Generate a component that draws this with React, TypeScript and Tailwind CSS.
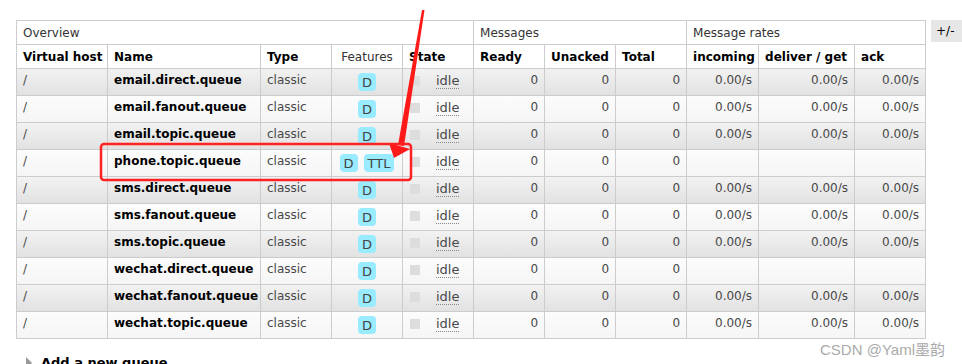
import React from "react";

type Queue = {
  name: string;
  features: string[];
  rates: boolean;
};

const queues: Queue[] = [
  { name: "email.direct.queue", features: ["D"], rates: true },
  { name: "email.fanout.queue", features: ["D"], rates: true },
  { name: "email.topic.queue", features: ["D"], rates: true },
  { name: "phone.topic.queue", features: ["D", "TTL"], rates: false },
  { name: "sms.direct.queue", features: ["D"], rates: true },
  { name: "sms.fanout.queue", features: ["D"], rates: true },
  { name: "sms.topic.queue", features: ["D"], rates: true },
  { name: "wechat.direct.queue", features: ["D"], rates: false },
  { name: "wechat.fanout.queue", features: ["D"], rates: true },
  { name: "wechat.topic.queue", features: ["D"], rates: true },
];

const cell = "border border-[#cccccc] h-[27px] px-[6px] pt-[4px] pb-0 align-top whitespace-nowrap leading-[15px]";

export default function App() {
  return (
    <div className="relative w-[962px] h-[364px] overflow-hidden bg-white font-['DejaVu_Sans',sans-serif] text-[12px] text-[#484848]">
      <div className="flex items-start pt-[20px] pl-[16px]">
        <table className="table-fixed border-collapse w-[910px]">
          <colgroup>
            <col className="w-[91px]" />
            <col className="w-[153px]" />
            <col className="w-[71px]" />
            <col className="w-[71px]" />
            <col className="w-[71px]" />
            <col className="w-[71px]" />
            <col className="w-[71px]" />
            <col className="w-[71px]" />
            <col className="w-[72px]" />
            <col className="w-[96px]" />
            <col className="w-[71px]" />
          </colgroup>
          <thead>
            <tr className="text-[#333333]">
              <th colSpan={5} className="border border-[#cccccc] h-[24px] px-[6px] text-left font-normal">Overview</th>
              <th colSpan={3} className="border border-[#cccccc] h-[24px] px-[6px] text-left font-normal">Messages</th>
              <th colSpan={3} className="border border-[#cccccc] h-[24px] px-[6px] text-left font-normal">Message rates</th>
            </tr>
            <tr className="text-black">
              <th className="border border-[#cccccc] h-[24px] px-[6px] text-left font-bold whitespace-nowrap">Virtual host</th>
              <th className="border border-[#cccccc] px-[6px] text-left font-bold">Name</th>
              <th className="border border-[#cccccc] px-[6px] text-left font-bold">Type</th>
              <th className="border border-[#cccccc] px-[6px] text-center font-normal text-[#333333]">Features</th>
              <th className="border border-[#cccccc] px-[6px] text-left font-bold">State</th>
              <th className="border border-[#cccccc] px-[6px] text-left font-bold">Ready</th>
              <th className="border border-[#cccccc] px-[6px] text-left font-bold">Unacked</th>
              <th className="border border-[#cccccc] px-[6px] text-left font-bold">Total</th>
              <th className="border border-[#cccccc] px-[6px] text-left font-bold">incoming</th>
              <th className="border border-[#cccccc] px-[6px] text-left font-bold whitespace-nowrap">deliver / get</th>
              <th className="border border-[#cccccc] px-[6px] text-left font-bold">ack</th>
            </tr>
          </thead>
          <tbody>
            {queues.map((q, i) => (
              <tr
                key={q.name}
                className={
                  i % 2 === 0
                    ? "bg-linear-to-b from-[#f2f2f2] to-[#e1e1e1]"
                    : "bg-linear-to-b from-[#fcfcfc] to-[#f5f5f5]"
                }
              >
                <td className={cell}>/</td>
                <td className={cell + " font-bold text-black"}>{q.name}</td>
                <td className={cell}>classic</td>
                <td className={cell + " text-center"}>
                  <span className="inline-flex gap-[6px] align-top">
                    {q.features.map((f) => (
                      <span key={f} className="inline-block rounded-[4px] bg-[#99ebff] px-[4px] h-[18px] leading-[19px] text-[#444444] text-[13px]">
                        {f}
                      </span>
                    ))}
                  </span>
                </td>
                <td className={cell}>
                  <span className="flex items-start">
                    <span className="mt-[3px] w-[10px] h-[10px] bg-[#dddddd] ml-[1px]" />
                    <span className="ml-[16px] border-b border-dotted border-[#888888] leading-[15px] text-[13px]">idle</span>
                  </span>
                </td>
                <td className={cell + " text-right"}>0</td>
                <td className={cell + " text-right"}>0</td>
                <td className={cell + " text-right"}>0</td>
                <td className={cell + " text-right"}>{q.rates ? "0.00/s" : ""}</td>
                <td className={cell + " text-right"}>{q.rates ? "0.00/s" : ""}</td>
                <td className={cell + " text-right"}>{q.rates ? "0.00/s" : ""}</td>
              </tr>
            ))}
          </tbody>
        </table>
        <button className="ml-[5px] h-[22px] w-[34px] bg-[#e6e6e6] text-black text-left pl-[5px] text-[12px]">+/-</button>
      </div>

      <div className="flex items-center mt-[14px] pl-[26px] gap-[9px]">
        <span className="w-0 h-0 border-y-[6px] border-y-transparent border-l-[6px] border-l-[#999999]" />
        <span className="font-bold text-black text-[13px]">Add a new queue</span>
      </div>

      <svg className="absolute inset-0 pointer-events-none" width="962" height="364" viewBox="0 0 962 364">
        <polygon points="422,10 424.5,10 404,146 398,145" fill="#ff1a1a" />
        <polygon points="389,143 410,149 394,158" fill="#ff1a1a" />
        <rect x="101" y="144" width="310" height="36" rx="3" fill="none" stroke="#ff2222" strokeWidth="2.5" />
      </svg>

      <div className="absolute left-[820px] top-[339px] text-[15px] text-[#aaaaaa] font-['Liberation_Sans','Noto_Sans_CJK_SC',sans-serif] whitespace-nowrap">
        CSDN @Yaml墨韵
      </div>
    </div>
  );
}
